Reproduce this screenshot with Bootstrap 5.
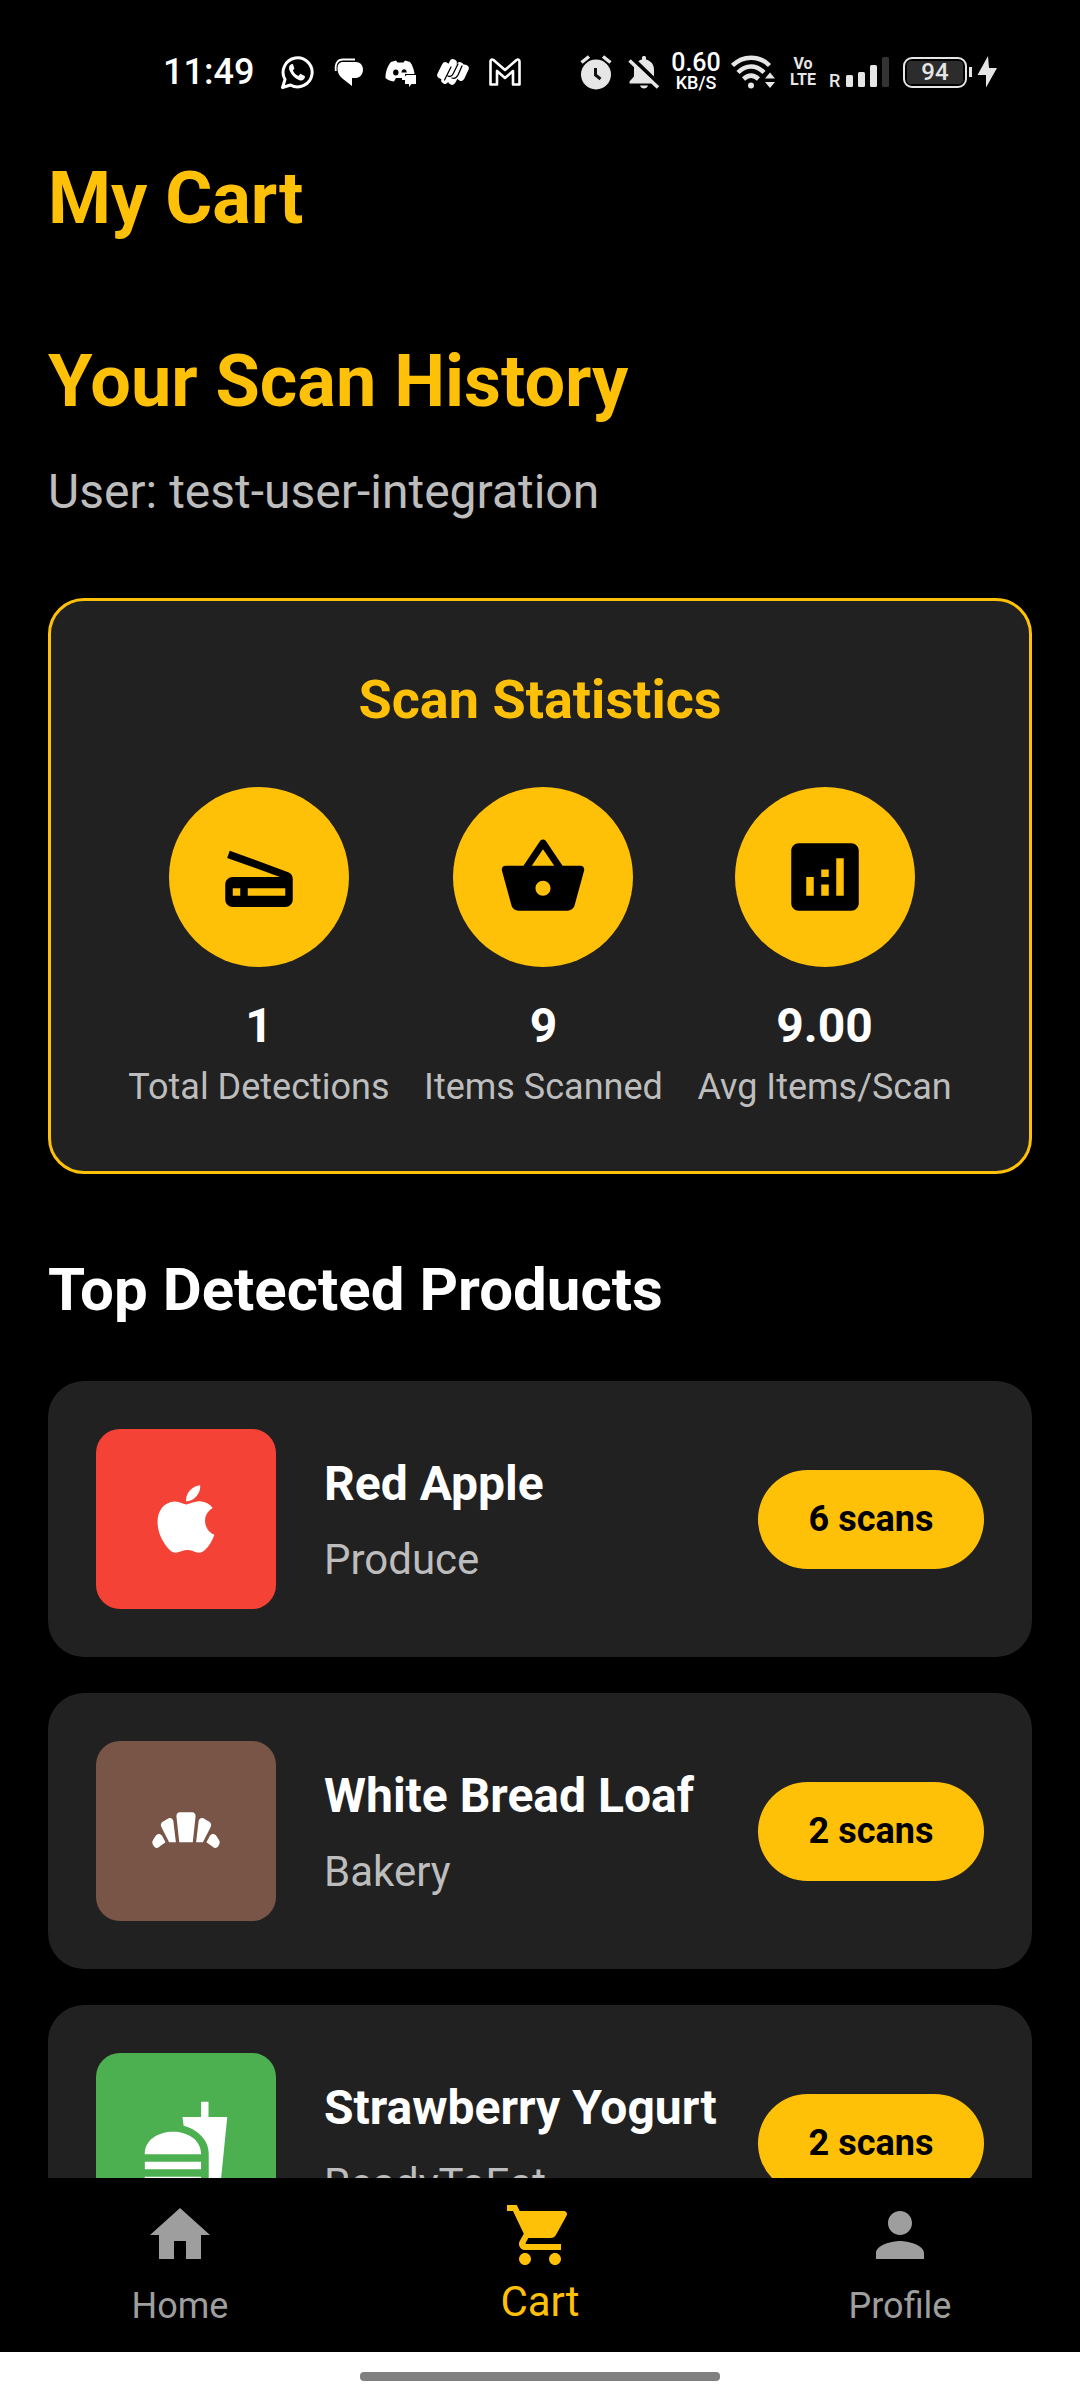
<!DOCTYPE html>
<html lang="en">
<head>
<meta charset="utf-8">
<meta name="viewport" content="width=device-width, initial-scale=1">
<title>My Cart</title>
<link href="https://cdn.jsdelivr.net/npm/bootstrap@5.3.0/dist/css/bootstrap.min.css" rel="stylesheet">
<script src="https://cdn.jsdelivr.net/npm/bootstrap@5.3.0/dist/js/bootstrap.bundle.min.js"></script>
<style>
  :root { --amber: #ffc107; --panel: #212121; --soft: #bdbdbd; --dim: #9e9e9e; }
  body { background: #000; color: #fff; font-family: Roboto, "Liberation Sans", sans-serif; }
  svg { display: block; flex: none; }
  .amber { color: var(--amber); }
  .soft { color: var(--soft); }

  .status-bar { height: 114px; padding: 30px 80px 0 163px; color: #e6e6e6; }
  .clock { font-size: 36px; line-height: 42px; width: 92px; font-weight: 500; color: #fff; }
  .notes { gap: 16px; margin-left: 24px; color: #fff; }
  .system { gap: 10px; margin-left: 54px; }
  .speed { width: 50px; font-weight: 500; color: #fff; }
  .speed-rate { font-size: 25px; line-height: 22px; }
  .speed-unit { font-size: 18px; line-height: 18px; }
  .volte { width: 28px; font-size: 16px; line-height: 16px; font-weight: 700; }
  .signal { gap: 6px; width: 62px; padding-left: 2px; font-size: 18px; line-height: 14px; font-weight: 500; }
  .battery { width: 64px; height: 31px; border: 2px solid #e6e6e6; border-radius: 9px; padding: 2px; margin-left: 4px; }
  .battery-level { background: #2c2c2c; border-radius: 4px; font-size: 24px; line-height: 23px; font-weight: 500; }
  .battery-tip { width: 3px; height: 10px; background: #e6e6e6; margin-left: 2px; }

  .app-bar { height: 168px; padding: 0 48px; }
  .title-text { font-size: 72px; line-height: 103px; font-weight: 700; }
  .body-text { font-size: 48px; line-height: 69px; }
  .label-text { font-size: 36px; line-height: 51px; }
  .sub-text { font-size: 42px; line-height: 60px; }
  .section-text { font-size: 60px; line-height: 87px; font-weight: 700; }
  .panel-text { font-size: 54px; line-height: 78px; font-weight: 700; }

  .content { min-height: 0; padding: 48px; scrollbar-width: none; }
  .user-line { margin-top: 24px; }
  .stats { background: var(--panel); border: 3px solid var(--amber); border-radius: 36px; padding: 60px 60px 58px; margin: 72px 0; }
  .stats-row { margin-top: 48px; }
  .stats-row .label-text { margin-top: 2px; }
  .disc { width: 180px; height: 180px; background: var(--amber); color: #000; margin-bottom: 24px; }
  .products { gap: 36px; margin-top: 48px; }
  .product { background: var(--panel); border-radius: 36px; padding: 48px; }
  .product-text { gap: 12px; }
  .tile { width: 180px; height: 180px; border-radius: 24px; margin-right: 48px; flex: none; }
  .tile-red { background: #f44336; }
  .tile-brown { background: #795548; }
  .tile-green { background: #4caf50; }
  .scan-pill { min-width: 226px; padding: 24px; font-size: 36px; line-height: 51px; background: var(--amber); color: #000; }

  .tab-bar { padding: 21px 0 20px; }
  .tab-bar a { color: var(--dim); }
  .tab-bar a.active { color: var(--amber); }
  .tab-label { height: 61px; }
  .gesture { height: 48px; background: #fff; }
  .gesture-handle { width: 360px; height: 9px; border-radius: 4px; background: #808080; }
</style>
</head>
<body>
<div class="vh-100 d-flex flex-column overflow-hidden">

  <div class="status-bar d-flex align-items-center flex-shrink-0">
    <span class="clock">11:49</span>
    <div class="notes d-flex align-items-center">
      <svg width="36" height="36" viewBox="0 0 36 36" fill="currentColor"><path d="M3.500 33.500 6 25.500A14.500 14.500 0 1 1 11.500 31z" fill="none" stroke="currentColor" stroke-width="3" stroke-linejoin="round"/><path d="M13 10c-3 1-3.600 4-2.200 7 2.200 4.700 5.200 7.500 9.700 9.200 3 .8 5.500-1 5.500-4l-4.500-2.400-2.100 2.200c-2.700-1.200-4.400-3-5.500-5.500l1.500-2-1.400-4.200z"/></svg>
      <svg width="36" height="36" viewBox="0 0 36 36" fill="currentColor"><path d="M12 8h13c4 0 7 3 7 7.500 0 5-3 8-7 8.500h-4v8l-9-7c-3.500-3-5.500-6-5.500-10C6.500 10 8.500 8 12 8z"/><path d="M4.800 17C3.800 9 7 5.500 12 5.500h12" fill="none" stroke="currentColor" stroke-width="1.800"/></svg>
      <svg width="36" height="36" viewBox="0 0 36 36" fill="currentColor"><path d="M8 8l5-1.500 1.500 2h6l1.500-2L27 8c2.500 3 4.200 8 4.500 12H22v6h-3v-2h-6l-2 3.500C7 27 4.500 26 2.500 24 2.500 18 4.500 12 8 8z"/><ellipse cx="12.800" cy="18.500" rx="2.700" ry="3" fill="#000"/><path d="M18.500 18.500c0-2 1-3.300 2.700-3.300s2.500 1.400 2.500 3.300z" fill="#000"/><path d="M23.500 21H33v9h-4.500L26 33v-3h-4v-7.500z"/></svg>
      <svg width="36" height="36" viewBox="0 0 36 36" fill="none" stroke="currentColor" stroke-linecap="round" stroke-linejoin="round"><path d="M6 21l4.500-9M10 26l8-17M17 27l8-15M26 23l4-8.500" stroke-width="7.500"/><path d="M9.500 26 16 13M13 22c2 1 4 0 5-2l5-10M17 24c3 1 5-1 6-3l4-9" stroke="#000" stroke-width="1.300"/></svg>
      <svg width="36" height="36" viewBox="0 0 36 36" fill="none" stroke="currentColor" stroke-width="2.600" stroke-linejoin="round"><path d="M3.500 30.500V7.500c0-2 1.500-2.500 3-1.500L18 16 29.500 6c1.500-1 3-.5 3 1.500v23h-6.500V17L18 24 10 17v13.500z"/></svg>
    </div>
    <div class="system d-flex align-items-center">
      <svg width="38" height="36" viewBox="0 0 38 36" fill="none" stroke="currentColor"><circle cx="19" cy="20.500" r="15" fill="currentColor" stroke="none"/><path d="M4.500 8.500 12 2.500M33.500 8.500 26 2.500" stroke-width="3.500"/><path d="M18.500 14v7l5 4" stroke="#111" stroke-width="3"/></svg>
      <svg width="36" height="36" viewBox="0 0 36 36" fill="currentColor"><path d="M17 3.500c0-2 4-2 4 0v2c5 1.300 8 5 8 10v7l4.500 5v2H4.500v-2l4.500-5v-7c0-5 3-8.700 8-10z"/><path d="M15 31.500h8c-1 4-7 4-8 0z"/><path d="M6.500 3.500 35 31" stroke="#000" stroke-width="4"/><path d="M4.500 6.500 33 33.500" stroke="currentColor" stroke-width="3.500"/></svg>
      <div class="speed text-center"><div class="speed-rate">0.60</div><div class="speed-unit">KB/S</div></div>
      <svg width="48" height="36" viewBox="0 0 48 36" fill="none" stroke="currentColor" stroke-width="4.500"><path d="M1.500 11.500C12 1 28 1 38.500 11.500M7 18.500c8-8 18-8 26 0M12.500 25c5-4.500 10-4.500 15 0"/><circle cx="20" cy="31.500" r="3" fill="currentColor" stroke="none"/><path d="M34 24.500l5-6 5 6zM34 28l5 6 5-6z" fill="currentColor" stroke="none"/></svg>
      <div class="volte text-center"><div>Vo</div><div>LTE</div></div>
      <div class="signal d-flex align-items-end"><span>R</span>
        <svg width="44" height="32" viewBox="0 0 44 32" fill="currentColor"><rect x="0" y="19" width="7" height="12" rx="1.500"/><rect x="12" y="16" width="7" height="15" rx="1.500"/><rect x="24" y="9" width="7" height="22" rx="1.500"/><rect x="36" y="1" width="7" height="30" rx="1.500" fill="#333"/></svg>
      </div>
      <div class="d-flex align-items-center">
        <div class="battery"><div class="battery-level text-center">94</div></div>
        <div class="battery-tip"></div>
        <svg class="ms-1" width="22" height="34" viewBox="0 0 22 34" fill="currentColor"><path d="M12 1 1.500 20H10v12.500L21 13h-8z"/></svg>
      </div>
    </div>
  </div>

  <header class="app-bar d-flex align-items-center flex-shrink-0">
    <h1 class="title-text amber mb-0">My Cart</h1>
  </header>

  <main class="content flex-grow-1 overflow-auto">
    <h2 class="title-text amber mb-0">Your Scan History</h2>
    <p class="user-line body-text soft mb-0">User: test-user-integration</p>

    <section class="stats">
      <h3 class="panel-text amber text-center mb-0">Scan Statistics</h3>
      <div class="stats-row d-flex justify-content-around text-center">
        <div class="d-flex flex-column align-items-center">
          <div class="disc rounded-circle d-flex align-items-center justify-content-center">
            <svg width="90" height="90" viewBox="0 0 24 24" fill="currentColor"><path d="M19.800 10.700L4.200 5l-.7 1.900L17.600 12H5c-1.100 0-2 .9-2 2v4c0 1.100.9 2 2 2h14c1.100 0 2-.9 2-2v-5.500c0-.8-.5-1.600-1.200-1.800zM7 17H5v-2h2v2zm12 0H9v-2h10v2z"/></svg>
          </div>
          <strong class="body-text">1</strong>
          <span class="label-text soft">Total Detections</span>
        </div>
        <div class="d-flex flex-column align-items-center">
          <div class="disc rounded-circle d-flex align-items-center justify-content-center">
            <svg width="90" height="90" viewBox="0 0 24 24" fill="currentColor"><path d="M17.210 9l-4.380-6.560c-.19-.28-.51-.42-.83-.42-.32 0-.64.14-.83.43L6.790 9H2c-.55 0-1 .45-1 1 0 .09.01.18.04.27l2.540 9.270c.23.84 1 1.460 1.920 1.460h13c.92 0 1.690-.62 1.930-1.460l2.540-9.270L23 10c0-.55-.45-1-1-1h-4.790zM9 9l3-4.400L15 9H9zm3 8c-1.100 0-2-.9-2-2s.9-2 2-2 2 .9 2 2-.9 2-2 2z"/></svg>
          </div>
          <strong class="body-text">9</strong>
          <span class="label-text soft">Items Scanned</span>
        </div>
        <div class="d-flex flex-column align-items-center">
          <div class="disc rounded-circle d-flex align-items-center justify-content-center">
            <svg width="90" height="90" viewBox="0 0 24 24" fill="currentColor"><path d="M19 3H5c-1.100 0-2 .9-2 2v14c0 1.100.9 2 2 2h14c1.100 0 2-.9 2-2V5c0-1.100-.9-2-2-2zM9 17H7v-5h2v5zm4 0h-2v-3h2v3zm0-5h-2v-2h2v2zm4 5h-2V7h2v10z"/></svg>
          </div>
          <strong class="body-text">9.00</strong>
          <span class="label-text soft">Avg Items/Scan</span>
        </div>
      </div>
    </section>

    <h3 class="section-text mb-0">Top Detected Products</h3>
    <div class="products d-flex flex-column">
      <article class="product d-flex align-items-center">
        <div class="tile tile-red d-flex align-items-center justify-content-center">
          <svg width="90" height="90" viewBox="0 0 24 24" fill="currentColor"><path d="M17.050 20.280c-.98.95-2.050.8-3.080.35-1.090-.46-2.090-.48-3.240 0-1.440.62-2.200.44-3.060-.35C2.790 15.250 3.510 7.590 9.050 7.310c1.350.07 2.290.74 3.080.8 1.180-.24 2.310-.93 3.570-.84 1.510.12 2.650.72 3.400 1.800-3.120 1.870-2.380 5.980.48 7.130-.57 1.500-1.310 2.990-2.540 4.090zM12.030 7.250c-.15-2.230 1.660-4.070 3.740-4.250.29 2.580-2.340 4.500-3.740 4.250z"/></svg>
        </div>
        <div class="product-text flex-grow-1 d-flex flex-column">
          <strong class="body-text text-nowrap">Red Apple</strong>
          <span class="sub-text soft">Produce</span>
        </div>
        <span class="scan-pill badge rounded-pill">6 scans</span>
      </article>
      <article class="product d-flex align-items-center">
        <div class="tile tile-brown d-flex align-items-center justify-content-center">
          <svg width="90" height="90" viewBox="0 0 24 24" fill="currentColor"><path d="M19.280 16.340C18.070 15.450 17.460 15 17.460 15s.32-.59.96-1.780c.38-.59 1.220-.59 1.600 0l.81 1.260c.19.3.21.68.06 1l-.22.47c-.25.54-.91.72-1.390.39zM4.720 16.340c-.48.33-1.130.15-1.390-.38l-.22-.47c-.15-.32-.13-.7.06-1l.81-1.260c.38-.59 1.220-.59 1.600 0C6.220 14.410 6.540 15 6.540 15s-.61.45-1.820 1.340zM15.360 9.370c.09-.68.73-1.060 1.270-.75l1.590.9c.46.26.63.91.36 1.410L16.500 15h-1.800zM8.630 9.370L9.300 15H7.500l-2.070-4.070c-.28-.5-.1-1.150.36-1.410l1.590-.9c.53-.31 1.170.07 1.250.75zM13.800 15h-3.600l-.75-6.900c-.07-.6.35-1.100.9-1.100h3.300c.55 0 .97.5.9 1.100z"/></svg>
        </div>
        <div class="product-text flex-grow-1 d-flex flex-column">
          <strong class="body-text text-nowrap">White Bread Loaf</strong>
          <span class="sub-text soft">Bakery</span>
        </div>
        <span class="scan-pill badge rounded-pill">2 scans</span>
      </article>
      <article class="product d-flex align-items-center">
        <div class="tile tile-green d-flex align-items-center justify-content-center">
          <svg width="90" height="90" viewBox="0 0 24 24" fill="currentColor"><path d="M18.060 22.990h1.660c.84 0 1.530-.64 1.630-1.460L23 5.050h-5V1h-1.970v4.050h-4.970l.3 2.340c1.710.47 3.310 1.320 4.270 2.260 1.440 1.420 2.430 2.890 2.430 5.290v8.050zM1 21.990V21h15.030v.99c0 .55-.45 1-1.010 1H2.010c-.56 0-1.010-.45-1.010-1zm15.030-7c0-8-15.030-8-15.030 0h15.030zM1.020 17h15v2h-15z"/></svg>
        </div>
        <div class="product-text flex-grow-1 d-flex flex-column">
          <strong class="body-text text-nowrap">Strawberry Yogurt</strong>
          <span class="sub-text soft">ReadyToEat</span>
        </div>
        <span class="scan-pill badge rounded-pill">2 scans</span>
      </article>
    </div>
  </main>

  <nav class="tab-bar row g-0 flex-shrink-0">
    <a href="#" class="col d-flex flex-column align-items-center text-decoration-none">
      <svg width="72" height="72" viewBox="0 0 24 24" fill="currentColor"><path d="M10 20v-6h4v6h5v-8h3L12 3 2 12h3v8z"/></svg>
      <span class="tab-label label-text d-flex align-items-end">Home</span>
    </a>
    <a href="#" class="active col d-flex flex-column align-items-center text-decoration-none" aria-current="page">
      <svg width="72" height="72" viewBox="0 0 24 24" fill="currentColor"><path d="M7 18c-1.100 0-1.990.9-1.990 2S5.900 22 7 22s2-.9 2-2-.9-2-2-2zM1 2v2h2l3.600 7.590-1.350 2.450c-.16.28-.25.61-.25.96 0 1.100.9 2 2 2h12v-2H7.420c-.14 0-.25-.11-.25-.25l.03-.12.9-1.630h7.450c.75 0 1.410-.41 1.750-1.030l3.580-6.490c.08-.14.12-.31.12-.48 0-.55-.45-1-1-1H5.210l-.94-2H1zm16 16c-1.100 0-1.990.9-1.990 2s.89 2 1.990 2 2-.9 2-2-.9-2-2-2z"/></svg>
      <span class="tab-label sub-text d-flex align-items-end">Cart</span>
    </a>
    <a href="#" class="col d-flex flex-column align-items-center text-decoration-none">
      <svg width="72" height="72" viewBox="0 0 24 24" fill="currentColor"><path d="M12 12c2.210 0 4-1.790 4-4s-1.790-4-4-4-4 1.790-4 4 1.790 4 4 4zm0 2c-2.670 0-8 1.340-8 4v2h16v-2c0-2.660-5.330-4-8-4z"/></svg>
      <span class="tab-label label-text d-flex align-items-end">Profile</span>
    </a>
  </nav>
  <div class="gesture d-flex align-items-center justify-content-center flex-shrink-0">
    <div class="gesture-handle"></div>
  </div>
</div>
</body>
</html>
